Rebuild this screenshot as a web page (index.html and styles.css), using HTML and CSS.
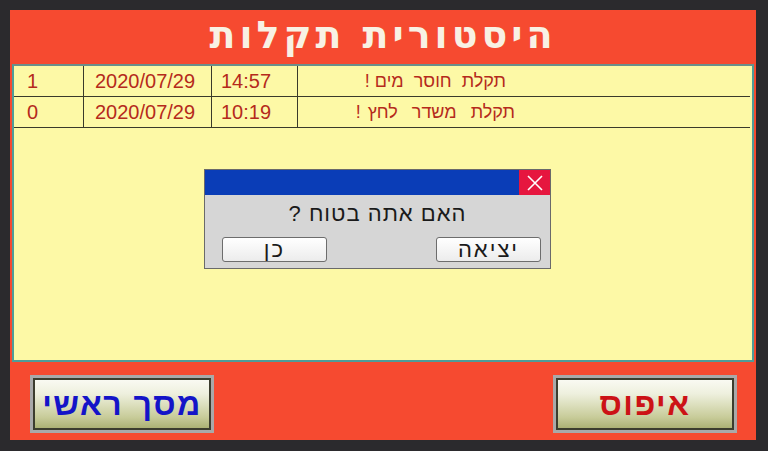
FILE: index.html
```html
<!DOCTYPE html>
<html lang="he">
<head>
<meta charset="utf-8">
<title>היסטורית תקלות</title>
<link rel="stylesheet" href="styles.css">
</head>
<body>
<div class="panel">
  <header class="title" dir="rtl">היסטורית תקלות</header>
  <main class="log">
    <div class="row">
      <div class="cell num">1</div>
      <div class="cell date">2020/07/29</div>
      <div class="cell time">14:57</div>
      <div class="cell msg" dir="rtl">תקלת&nbsp; חוסר&nbsp; מים !</div>
    </div>
    <div class="row">
      <div class="cell num">0</div>
      <div class="cell date">2020/07/29</div>
      <div class="cell time">10:19</div>
      <div class="cell msg msg2" dir="rtl">תקלת&nbsp; משדר&nbsp; לחץ !</div>
    </div>
    <div class="dialog">
      <div class="dialog-bar">
        <span class="dialog-close">
          <svg width="20" height="16" viewBox="0 0 20 16"><path d="M3 1 L17 15 M17 1 L3 15" stroke="#fff" stroke-width="1.6" fill="none"/></svg>
        </span>
      </div>
      <div class="dialog-body">
        <div class="dialog-text" dir="rtl">האם אתה בטוח ?</div>
        <div class="dialog-buttons">
          <button class="dbtn">כן</button>
          <button class="dbtn">יציאה</button>
        </div>
      </div>
    </div>
  </main>
  <footer class="footer">
    <button class="big blue">מסך ראשי</button>
    <button class="big red">איפוס</button>
  </footer>
</div>
</body>
</html>
```

FILE: styles.css
```css
* { box-sizing: border-box; }
html, body { margin: 0; padding: 0; }
body {
  width: 768px;
  height: 451px;
  background: #2b2a2d;
  overflow: hidden;
  font-family: "Liberation Sans", Arial, sans-serif;
}
.panel {
  margin: 10px 0 0 10px;
  width: 746px;
  height: 430px;
  background: #f64a30;
  display: flex;
  flex-direction: column;
}
.title {
  height: 54px;
  display: flex;
  align-items: center;
  justify-content: center;
  color: #f8f1e4;
  font-family: "DejaVu Sans", sans-serif;
  font-weight: bold;
  font-size: 38px;
  letter-spacing: 4px;
  padding-bottom: 4px;
}
.log {
  position: relative;
  margin: 0 2px;
  height: 298px;
  background: #fdf9a6;
  border: 2px solid #4f9c98;
  border-top-color: #6b8f8a;
}
.row {
  display: grid;
  grid-template-columns: 70px 128px 86px 454px;
  height: 31px;
  border-bottom: 1px solid #3a3a2a;
  margin-right: 2px;
}
.cell {
  color: #b52a1c;
  font-size: 20px;
  line-height: 30px;
  border-right: 1px solid #3a3a2a;
}
.cell.num { padding-left: 13px; }
.cell.date { padding-left: 11px; }
.cell.time { padding-left: 9px; }
.cell.msg {
  border-right: none;
  font-size: 18px;
  text-align: right;
  padding-right: 246px;
}
.cell.msg2 { padding-right: 237px; word-spacing: 2px; }
.dialog {
  position: absolute;
  left: 190px;
  top: 103px;
  width: 347px;
  height: 100px;
  border: 1px solid #6a6a6a;
  background: #d6d6d6;
  display: flex;
  flex-direction: column;
}
.dialog-bar {
  height: 25px;
  background: #0a3db7;
  display: flex;
  justify-content: flex-end;
}
.dialog-close {
  width: 31px;
  height: 25px;
  background: #e6163f;
  display: flex;
  align-items: center;
  justify-content: center;
}
.dialog-body {
  flex: 1;
  display: flex;
  flex-direction: column;
  align-items: center;
}
.dialog-text {
  margin-top: 6px;
  font-size: 22px;
  line-height: 26px;
  color: #1a1a1a;
  letter-spacing: 1px;
}
.dialog-buttons {
  margin-top: 10px;
  width: 100%;
  padding: 0 9px 0 17px;
  display: flex;
  justify-content: space-between;
}
.dbtn {
  width: 105px;
  height: 25px;
  border: 1px solid #6d6d6d;
  border-radius: 3px;
  background: linear-gradient(#ffffff, #ececec);
  font-family: "Liberation Sans", Arial, sans-serif;
  font-size: 22px;
  line-height: 22px;
  color: #1a1a1a;
  padding: 0;
  letter-spacing: 2px;
}
.footer {
  flex: 1;
  display: flex;
  justify-content: space-between;
  align-items: flex-start;
  padding: 13px 19px 0 20px;
}
.big {
  width: 184px;
  height: 58px;
  border: 3px solid #a9a9a9;
  padding: 0;
  font-family: "Liberation Sans", Arial, sans-serif;
  font-weight: bold;
  font-size: 32px;
  letter-spacing: 1.5px;
  box-shadow: inset 0 0 0 2px #3c3d2e;
  background: linear-gradient(#fbfbf5 0%, #eef0de 30%, #c8cc9a 75%, #a7ad6e 100%);
}
.big.blue { color: #1414c8; }
.big.red { color: #cc1216; }
```
